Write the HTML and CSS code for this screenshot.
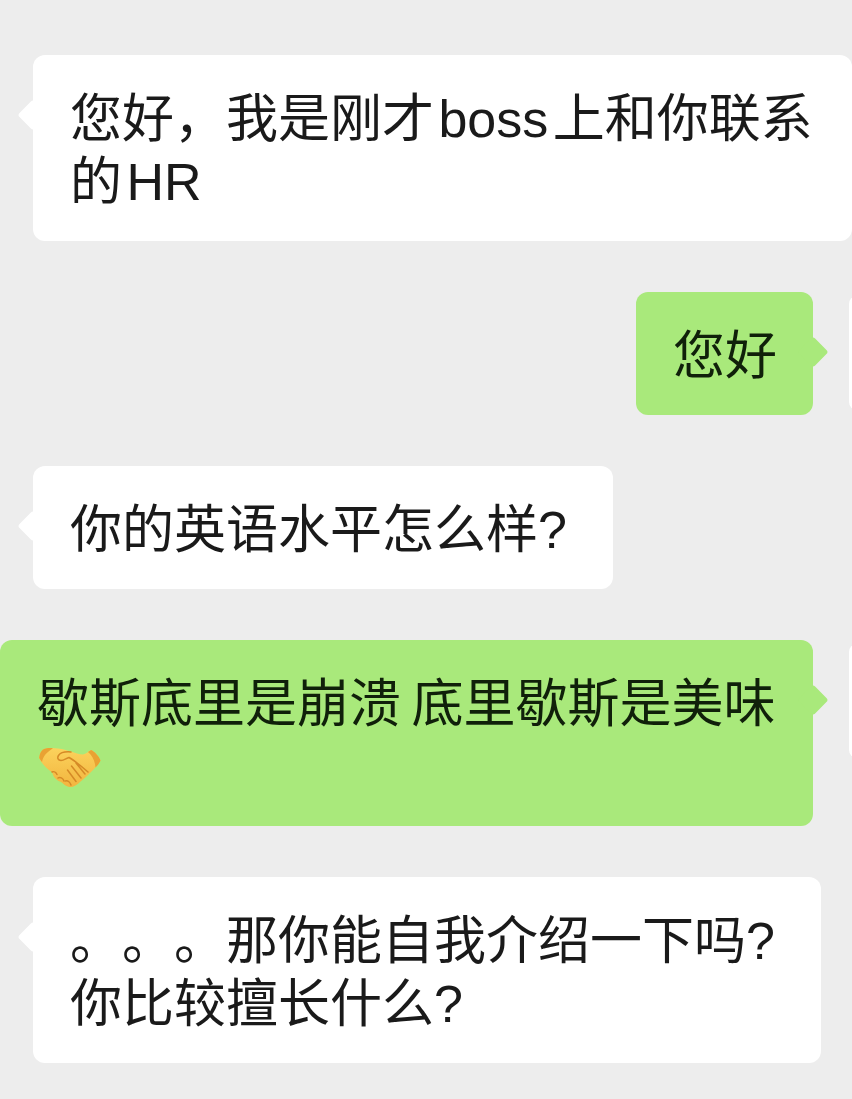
FILE: index.html
```html
<!DOCTYPE html>
<html lang="zh-CN">
<head>
<meta charset="UTF-8"/>
<meta name="viewport" content="width=device-width,initial-scale=1.0"/>
<title>聊天记录</title>
<link rel="stylesheet" href="styles.css">
</head>
<body>

<div class="chat">
  <div class="row left">
    <div class="bubble wide">您好，我是刚才 boss 上和你联系<br>的 HR</div>
  </div>
  <div class="row right">
    <div class="bubble green">您好</div>
    <div class="avatar"></div>
  </div>
  <div class="row left">
    <div class="bubble">你的英语水平怎么样<span class="q">?</span></div>
  </div>
  <div class="row right">
    <div class="bubble green flush">歇斯底里是崩溃 底里歇斯是美味<br>
      <svg class="shake" viewBox="0 0 63 45" role="img" aria-label="握手">
        <defs>
          <linearGradient id="skin" x1="0" y1="0" x2="0" y2="1">
            <stop offset="0" stop-color="#fbd25c"/>
            <stop offset="1" stop-color="#f2b53f"/>
          </linearGradient>
        </defs>
        <path fill="url(#skin)" d="M5 4.500C10 2.500 16 3 20 3.500C25 4 29 5.500 33 6.500C37 7.500 41 9.500 45 9.500C48 9 50 6.500 53 5C56 6 61 11 62.500 15.500C61 19 57 23 53.500 26.500C50 30 46 34 42 37C39 40 35 42.500 31.500 42C28 41.500 25 38.500 23 37C20 36 16 33 15 30C14.500 28 14 27 13 26.500C9 24 3 18 1.200 13C1.500 9 3 6 5 4.500Z"/>
        <path fill="#e9a233" d="M5 4.500C8 3 12 3 15 3.200C9 7 5 11 4 17C3 15.500 2 14.500 1.200 13C1.500 9 3 6 5 4.500ZM53 5C56 6 61 11 62.500 15.500C61.500 18 59.500 20.500 57.500 22.500C57 16 54 10 50 7C51 6.300 52 5.500 53 5Z"/>
        <path fill="none" stroke="#d58a26" stroke-width="1.500" stroke-linecap="round" stroke-linejoin="round" d="M33 7C27 6.500 22.500 7.500 20.500 10.500C19 13 20 15.500 23 15.500C26 15.500 28.500 13 31 12.500C36 15 43 21 50 27M38 18L47 29M33.500 21L43 33M29.500 25L38 36.500M14 27C16 26 18 27.500 19 29.500M20 33C22 31.500 25 33 26 36M27.500 36C29.500 35 32 37 33 40"/>
      </svg>
    </div>
    <div class="avatar"></div>
  </div>
  <div class="row left">
    <div class="bubble">。。。那你能自我介绍一下吗<span class="q">?</span><br>你比较擅长什么?</div>
  </div>
</div>

</body>
</html>
```

FILE: styles.css
```css
html, body { margin:0; height:100%; overflow:hidden; }
body { background:#ededed; color:#1a1a1a; font-family:"Liberation Sans","Noto Sans CJK SC",sans-serif; font-size:52px; line-height:63px; text-spacing-trim:space-all; }
.chat { display:flex; flex-direction:column; gap:51px; padding-top:55px; }
.row { display:flex; align-items:flex-start; }
.row.left { padding-left:33px; }
.row.right { justify-content:flex-end; margin-right:-111px; gap:36px; }
.bubble { position:relative; flex:none; background:#fff; border-radius:12px; padding:33px 37px 27px; white-space:nowrap; }
.bubble.wide { width:745px; word-spacing:-10px; }
.bubble::before { content:""; position:absolute; top:49px; left:-11px; width:22px; height:22px; background:inherit; border-radius:3px; transform:rotate(45deg); }
.bubble.green { background:#a9e97b; color:#10200a; padding-right:36px; }
.bubble.green::before { left:auto; right:-11px; }
.bubble.flush { width:740px; word-spacing:-4px; }
.q { margin-right:9px; }
.avatar { flex:none; width:114px; height:114px; margin-top:4px; background:#fff; border-radius:8px; }
.shake { display:block; width:63px; height:45px; margin:9px 0 9px 1px; }
```
